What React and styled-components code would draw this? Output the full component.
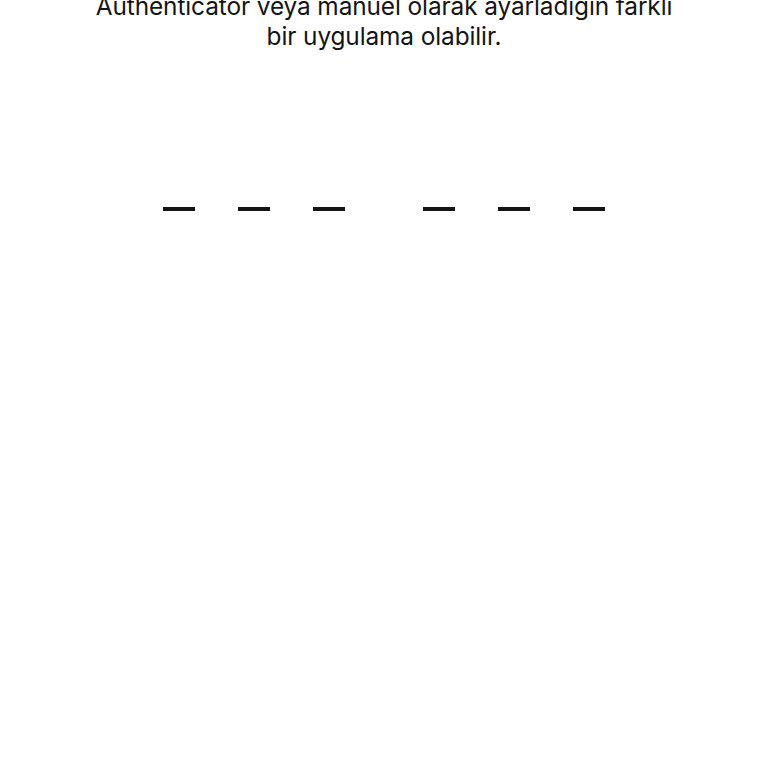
import React from "react";
import styled, { createGlobalStyle } from "styled-components";

const Global = createGlobalStyle`
  html, body { margin: 0; padding: 0; background: #fff; }
  body { font-family: Inter, "Noto Sans", sans-serif; -webkit-font-smoothing: antialiased; }
`;

const Page = styled.div`
  width: 768px;
  height: 768px;
  overflow: hidden;
  background: #fff;
  display: flex;
  flex-direction: column;
  align-items: center;
`;

const Description = styled.p`
  margin: -9px 0 0;
  font-size: 24.4px;
  line-height: 30px;
  color: #141414;
  text-align: center;
  letter-spacing: -0.1px;
`;

const CodeRow = styled.div`
  margin-top: 156px;
  display: flex;
  gap: 78px;
`;

const Group = styled.div`
  display: flex;
  gap: 43px;
`;

const Dash = styled.div`
  width: 32px;
  height: 4px;
  background: #141414;
`;

export default function App() {
  return (
    <>
      <Global />
      <Page>
        <Description>
          Authenticator veya manuel olarak ayarladığın farklı
          <br />
          bir uygulama olabilir.
        </Description>
        <CodeRow>
          {[0, 1].map((g) => (
            <Group key={g}>
              {[0, 1, 2].map((d) => (
                <Dash key={d} />
              ))}
            </Group>
          ))}
        </CodeRow>
      </Page>
    </>
  );
}
